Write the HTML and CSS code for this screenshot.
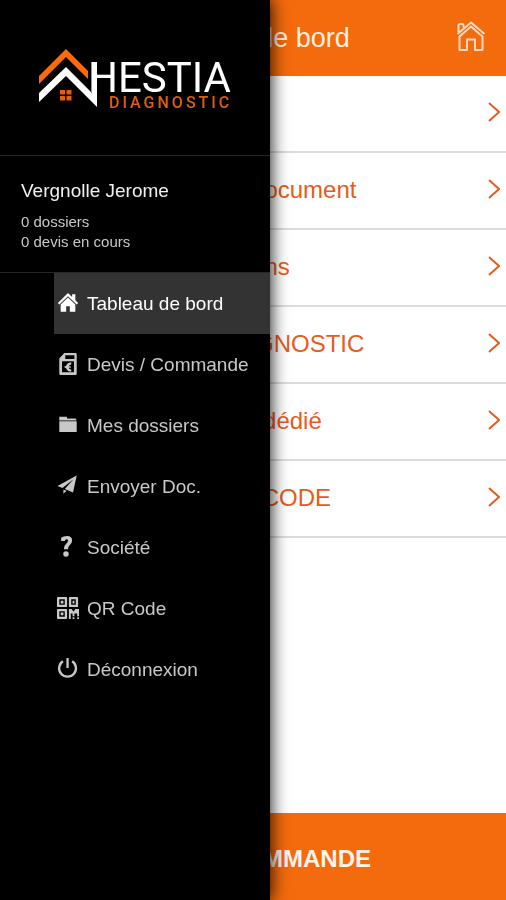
FILE: index.html
```html
<!DOCTYPE html>
<html lang="fr">
<head>
<meta charset="utf-8">
<meta name="viewport" content="width=device-width, initial-scale=1">
<title>Hestia Diagnostic</title>
<link rel="stylesheet" href="styles.css">
</head>
<body>
<main class="page">
  <header class="topbar">
    <h1 class="title">Tableau de bord</h1>
    <a class="home" href="#" aria-label="Accueil">
      <svg viewBox="0 0 30 32" width="30" height="32" fill="none" stroke="currentColor" stroke-width="2" stroke-linejoin="round">
        <path d="M2.500 12V5.500Q2.500 4 4 4H6Q7.500 4 7.500 5.500V7.500M1.500 14L15 2.500L28.500 14M3 17L15 6.500L27 17M3.500 16V30H11V19.500H19V30H26.500V16"/>
      </svg>
    </a>
  </header>
  <nav class="list" aria-label="Rubriques">
    <a class="row" href="#"><span>Commande</span><svg class="chevron" viewBox="0 0 12 20"><path d="M1 1L11 10L1 19"/></svg></a>
    <a class="row" href="#"><span>Envoyer un document</span><svg class="chevron" viewBox="0 0 12 20"><path d="M1 1L11 10L1 19"/></svg></a>
    <a class="row" href="#"><span>Nos prestations</span><svg class="chevron" viewBox="0 0 12 20"><path d="M1 1L11 10L1 19"/></svg></a>
    <a class="row" href="#"><span>HESTIA DIAGNOSTIC</span><svg class="chevron" viewBox="0 0 12 20"><path d="M1 1L11 10L1 19"/></svg></a>
    <a class="row" href="#"><span>Interlocuteur dédié</span><svg class="chevron" viewBox="0 0 12 20"><path d="M1 1L11 10L1 19"/></svg></a>
    <a class="row" href="#"><span>Scanner QR CODE</span><svg class="chevron" viewBox="0 0 12 20"><path d="M1 1L11 10L1 19"/></svg></a>
  </nav>
  <button class="order" type="button">DEVIS / COMMANDE</button>
</main>

<aside class="drawer">
  <div class="brand">
    <svg class="logo" viewBox="0 0 200 62" role="img" aria-label="Hestia Diagnostic">
      <path class="logo-roof" d="M1 28L28 1L50 23V31L28 9L1 36Z"/>
      <path class="logo-house" d="M1 45L28 19L54 45V14H59V59L28 28L1 54Z"/>
      <path class="logo-window" d="M22 42h5v4.500h-5zM28.500 42h5v4.500h-5zM22 48h5v4.500h-5zM28.500 48h5v4.500h-5z"/>
      <text class="logo-name" x="50" y="44">HESTIA</text>
      <text class="logo-sub" x="71" y="60">DIAGNOSTIC</text>
    </svg>
  </div>
  <div class="user">
    <p class="user-name">Vergnolle Jerome</p>
    <p class="user-info">0 dossiers</p>
    <p class="user-info">0 devis en cours</p>
  </div>
  <nav class="menu" aria-label="Menu">
    <a class="item active" href="#">
      <svg class="icon" viewBox="0 0 24 24"><path d="M12 1L1 12L2.500 13.500L12 4.500L21.500 13.500L23 12L20 9V2.500H16.500V5.500Z"/><path d="M12 6L4 13.500V21.500H10V15.500H14V21.500H20V13.500Z"/></svg>
      <span>Tableau de bord</span>
    </a>
    <a class="item" href="#">
      <svg class="icon icon-tall" viewBox="0 0 24 24"><path fill-rule="evenodd" d="M8 0H20Q21.500 0 21.500 1.500V22.500Q21.500 24 20 24H4Q2.500 24 2.500 22.500V6ZM9 2.500V6.500H19V2.500ZM5.500 9V21H18.500V9Z"/><path d="M15.500 10V12.500Q13 13 12.800 14.500H15V16H12.800Q13 17.500 15.500 18V20.500Q11 20 10 16.500L7.500 15.200L10 13.800Q11 10.500 15.500 10Z"/></svg>
      <span>Devis / Commande</span>
    </a>
    <a class="item" href="#">
      <svg class="icon" viewBox="0 0 24 24"><path d="M2.500 3H10Q11 3 11 4V5H20Q21 5 21 6V7H2.500ZM2.500 8H21.500V19.500H2.500Z"/></svg>
      <span>Mes dossiers</span>
    </a>
    <a class="item" href="#">
      <svg class="icon" viewBox="0 0 24 24"><path d="M21.500 0.500L0.500 12L6 14.200L18 4.500L8.500 15.300L17.500 19ZM7 16.200V20.500L10.500 17.300Z"/></svg>
      <span>Envoyer Doc.</span>
    </a>
    <a class="item" href="#">
      <svg class="icon" viewBox="0 0 24 24"><path d="M4.500 2Q7 0 11 0Q16.500 0 16.500 5Q16.500 8 13.800 10Q12 11.500 12 14.500H7.500Q7.500 10.500 10 8.500Q12 7 12 5Q12 3.500 10.300 3.500Q8.800 3.500 8.500 5.500H4.500Z"/><circle cx="9.800" cy="19.500" r="3"/></svg>
      <span>Société</span>
    </a>
    <a class="item" href="#">
      <svg class="icon" viewBox="0 0 24 24"><path fill-rule="evenodd" d="M1 0H10Q11 0 11 1V10Q11 11 10 11H1Q0 11 0 10V1Q0 0 1 0ZM2.500 2.500V8.500H8.500V2.500ZM14 0H22Q23 0 23 1V10Q23 11 22 11H14Q13 11 13 10V1Q13 0 14 0ZM15.500 2.500V8.500H20.500V2.500ZM1 13H10Q11 13 11 14V23Q11 24 10 24H1Q0 24 0 23V14Q0 13 1 13ZM2.500 15.500V21.500H8.500V15.500Z"/><path d="M4 4h3v3h-3zM17 4h2v3h-2zM4 17h3v3h-3zM13 13h3l2 3l2-3h4v8h-2v-3h-3v3h-2v-3h-2v6h-2zM17 22h2v2h-2zM22 22h2v2h-2z"/></svg>
      <span>QR Code</span>
    </a>
    <a class="item" href="#">
      <svg class="icon icon-line" viewBox="0 0 24 24"><path d="M6.500 3.500A9.200 9.200 0 1 0 16.500 3.500M11.500 0V11"/></svg>
      <span>Déconnexion</span>
    </a>
  </nav>
</aside>
</body>
</html>
```
FILE: styles.css
```css
* {
  box-sizing: border-box;
}

body {
  margin: 0;
  background: #fff;
  font-family: "Liberation Sans", Arial, sans-serif;
}

a {
  color: inherit;
  text-decoration: none;
}

.page {
  display: flex;
  flex-direction: column;
  min-height: 100vh;
}

.topbar {
  display: grid;
  grid-template-columns: 30px 1fr 30px;
  align-items: center;
  height: 76px;
  padding: 0 20px;
  background: #f36b0d;
  color: #ffeee2;
}

.title {
  grid-column: 2;
  margin: 0;
  font-size: 27px;
  font-weight: 400;
  text-align: center;
}

.home,
.chevron,
.icon,
.logo {
  display: block;
}

.home {
  color: #ffd9c0;
}

.list {
  flex: 1;
}

.row {
  display: flex;
  align-items: center;
  justify-content: space-between;
  height: 77px;
  padding: 0 6px 2px 123px;
  border-bottom: 2px solid #dcdcdc;
  color: #e65c1c;
  font-size: 24px;
}

.chevron {
  width: 12px;
  height: 20px;
  margin-bottom: 2px;
  fill: none;
  stroke: currentColor;
  stroke-width: 2;
}

.order {
  height: 87px;
  padding: 5px 0 0;
  border: 0;
  background: #f36b0d;
  color: #fff4ec;
  font: bold 24px "Liberation Sans", Arial, sans-serif;
}

.drawer {
  position: fixed;
  top: 0;
  bottom: 0;
  left: 0;
  width: 270px;
  background: #000;
  box-shadow: 0 0 16px 1px rgba(0, 0, 0, 0.9);
  color: #c8c8c8;
}

.brand {
  padding: 48px 32px 45px 38px;
  border-bottom: 1px solid #262626;
}

.logo {
  width: 200px;
  height: 62px;
  overflow: visible;
}

.logo-roof {
  fill: #ff6a08;
}

.logo-house,
.logo-name {
  fill: #fff;
}

.logo-window,
.logo-sub {
  fill: #e05c10;
}

.logo-name {
  font: 42px Roboto, sans-serif;
}

.logo-sub {
  font: 500 16px Roboto, sans-serif;
  letter-spacing: 3px;
}

.user {
  padding: 22px 21px 20px;
  border-bottom: 1px solid #262626;
}

.user p {
  margin: 0;
}

.user-name {
  padding-bottom: 9px;
  color: #f0f0f0;
  font-size: 19px;
  line-height: 25px;
}

.user-info {
  font-size: 15px;
  line-height: 20px;
}

.menu {
  padding-left: 54px;
}

.item {
  display: flex;
  align-items: center;
  gap: 8px;
  height: 61px;
  padding-left: 3px;
  font-size: 19px;
}

.active {
  background: #333;
  color: #fff;
}

.icon {
  width: 22px;
  height: 22px;
  margin-bottom: 2px;
  fill: currentColor;
}

.icon-tall {
  height: 24px;
}

.icon-line {
  fill: none;
  stroke: currentColor;
  stroke-width: 2.5;
}
```
